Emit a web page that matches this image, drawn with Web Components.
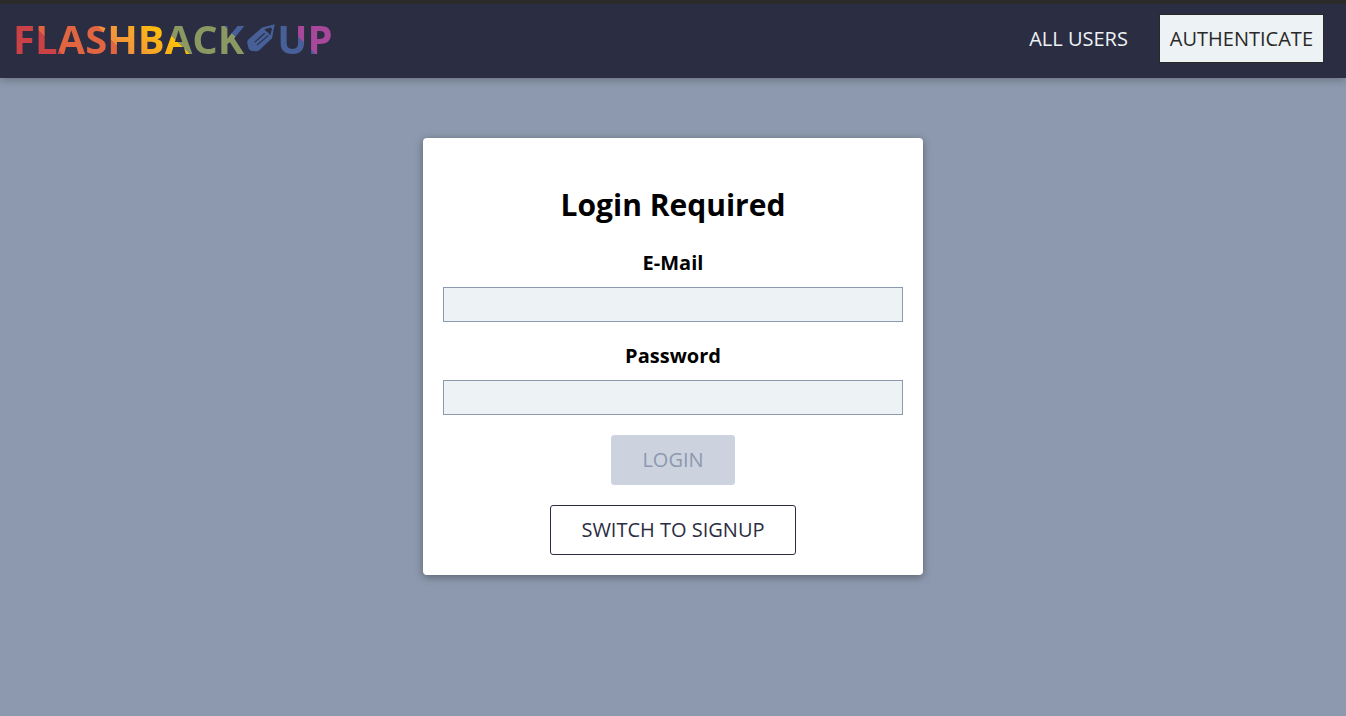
<!DOCTYPE html>
<html lang="en">
<head>
<meta charset="utf-8">
<title>Flashback-Up</title>
<style>
  html, body { margin: 0; min-height: 100%; }
  body { background: #8d99ae; font-family: "Open Sans", "Noto Sans", sans-serif; font-size: 20px; }
</style>
</head>
<body>
<fb-app></fb-app>
<script>
const define = (name, html, setup) => customElements.define(name, class extends HTMLElement {
  constructor() {
    super();
    this.attachShadow({ mode: "open" }).innerHTML = html;
  }
  connectedCallback() {
    if (setup) setup(this, this.shadowRoot);
  }
});

define("fb-logo", `
<style>
  :host { display: block; }
  a {
    display: flex; align-items: center; height: 60px;
    font-size: 40px; font-weight: 700; text-decoration: none; color: transparent;
    background: linear-gradient(45deg, #ca4246 16.67%, #e16541 16.67% 33.33%, #f18f43 33.33%, #ffc107 50%, #8b9862 50% 66.67%, #476098 66.67% 83.33%, #a7489b 83.33%);
    -webkit-background-clip: text; background-clip: text;
  }
  svg { width: 28px; height: 28px; margin: 0 2px 0 3px; }
</style>
<a href="#" aria-label="Flashback-Up"><span>FLASHBACK</span><svg viewBox="0 0 28 28" aria-hidden="true">
  <path fill="#476098" d="M27.7.3 15.2 3.4 1.4 15.4Q-.1 17 .3 19.2L1.600 24.200Q2.600 26.800 5 27.100L9.500 27.300Q11 27.200 12.500 25.900L25 14.300Z"/>
  <path fill="#2b2d42" d="M17.500 5.200 23.600 3.500 25 4.800 23.400 11 22.300 10.400 21 8.600 19.200 7.600Z"/>
  <path fill="none" stroke="#2b2d42" stroke-width="1.100" stroke-linecap="round" d="M8 17.800 17.500 9.500M10.300 20.800 20.800 11.800"/>
</svg><span>UP</span></a>`);

define("fb-nav-link", `
<style>
  :host { display: block; }
  a { display: block; box-sizing: border-box; padding: 10px; border: 1px solid transparent; line-height: 27px; color: #edf2f4; text-decoration: none; text-transform: uppercase; }
  :host([active]) a { background: #edf2f4; border-color: #292929; color: #292929; }
</style>
<a href="#"><slot></slot></a>`);

define("fb-header", `
<style>
  :host { display: block; }
  header { display: flex; align-items: center; justify-content: space-between; box-sizing: border-box; height: 78px; padding: 0 22px 0 13px; border-top: 4px solid #2b2b2b; background: #2b2d42; box-shadow: 0 2px 8px rgba(0,0,0,.26); }
  fb-logo, nav { margin-bottom: 6px; }
  nav { display: flex; gap: 20px; }
</style>
<header><fb-logo></fb-logo><nav><slot></slot></nav></header>`);

define("fb-field", `
<style>
  :host { display: block; text-align: center; }
  label { display: block; font-weight: 700; line-height: 28px; margin-bottom: 10px; }
  input { display: block; box-sizing: border-box; width: 100%; height: 35px; padding: 3px 5px; margin: 0; border: 1px solid #8d99ae; border-radius: 0; background: #edf2f4; font: inherit; }
</style>
<label for="field"></label><input id="field">`, (host, root) => {
  root.querySelector("label").textContent = host.getAttribute("label");
  root.querySelector("input").type = host.getAttribute("type");
});

define("fb-button", `
<style>
  :host { display: block; }
  button { display: block; box-sizing: border-box; height: 50px; padding: 0 30px 2px; border: 1px solid #2b2d42; border-radius: 3px; background: #fff; color: #2b2d42; font: inherit; text-transform: uppercase; }
  button:disabled { background: #ccd3de; border-color: #ccd3de; color: #8d99ae; }
</style>
<button type="button"><slot></slot></button>`, (host, root) => {
  root.querySelector("button").disabled = host.hasAttribute("disabled");
});

define("fb-card", `
<style>
  :host { display: block; box-sizing: border-box; width: 500px; max-width: 90%; margin: 60px auto; padding: 20px; background: #fff; border-radius: 4px; box-shadow: 0 2px 8px rgba(0,0,0,.36); }
</style>
<slot></slot>`);

define("fb-app", `
<style>
  :host { display: block; }
  h2 { margin: 26px 0 24px; font-size: 30px; line-height: 41px; text-align: center; }
  form { display: flex; flex-direction: column; gap: 20px; align-items: center; }
  fb-field { width: 100%; }
</style>
<fb-header><fb-nav-link>All users</fb-nav-link><fb-nav-link active>Authenticate</fb-nav-link></fb-header>
<main><fb-card><h2>Login Required</h2>
<form>
  <fb-field label="E-Mail" type="email"></fb-field>
  <fb-field label="Password" type="password"></fb-field>
  <fb-button disabled>Login</fb-button>
  <fb-button>Switch to signup</fb-button>
</form></fb-card></main>`);
</script>
</body>
</html>
